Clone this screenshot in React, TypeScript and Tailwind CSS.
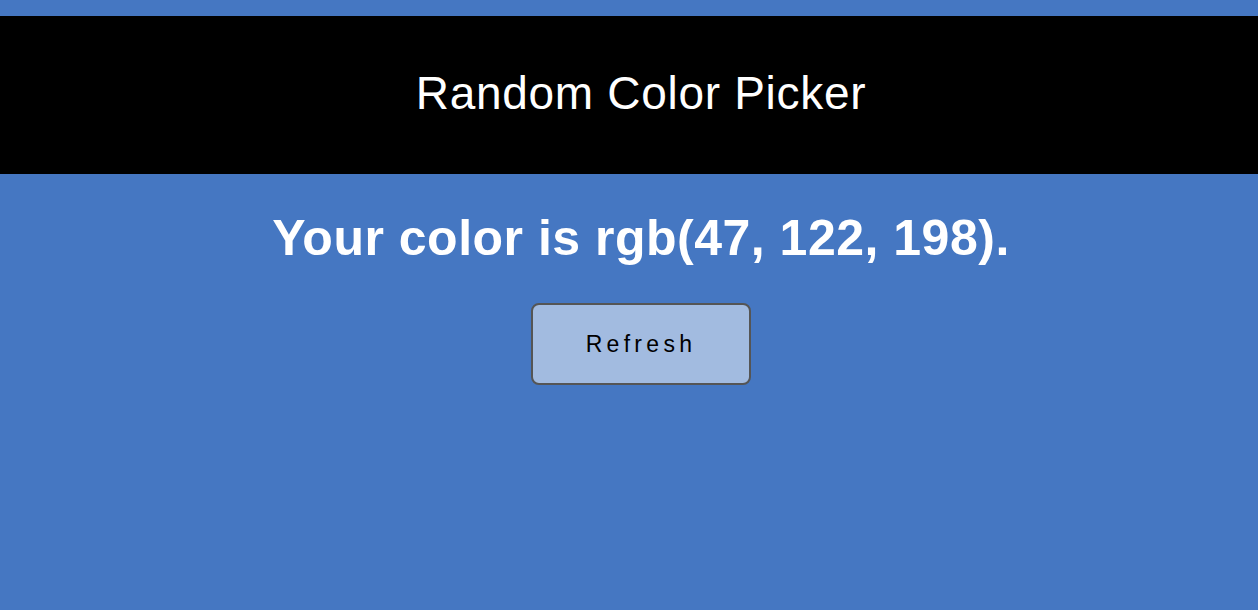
export default function App() {
  return (
    <div className="min-h-[610px] w-full bg-[#4577c2] pt-4 font-['Liberation_Sans',Arial,sans-serif]">
      <header className="flex h-[158px] items-center justify-center bg-black pb-[4px] pl-6">
        <h1 className="text-[46px] font-normal tracking-[0.7px] text-white">Random Color Picker</h1>
      </header>
      <main className="flex flex-col items-center pl-6">
        <h2 className="mt-[34px] text-[50px] font-bold leading-[60px] tracking-[0.5px] text-white">
          Your color is rgb(47, 122, 198).
        </h2>
        <button className="mt-[35px] h-[82px] w-[220px] rounded-[8px] border-2 border-[#555] bg-[#a2bbe0] text-[23px] tracking-[4.3px] text-black">
          Refresh
        </button>
      </main>
    </div>
  );
}
